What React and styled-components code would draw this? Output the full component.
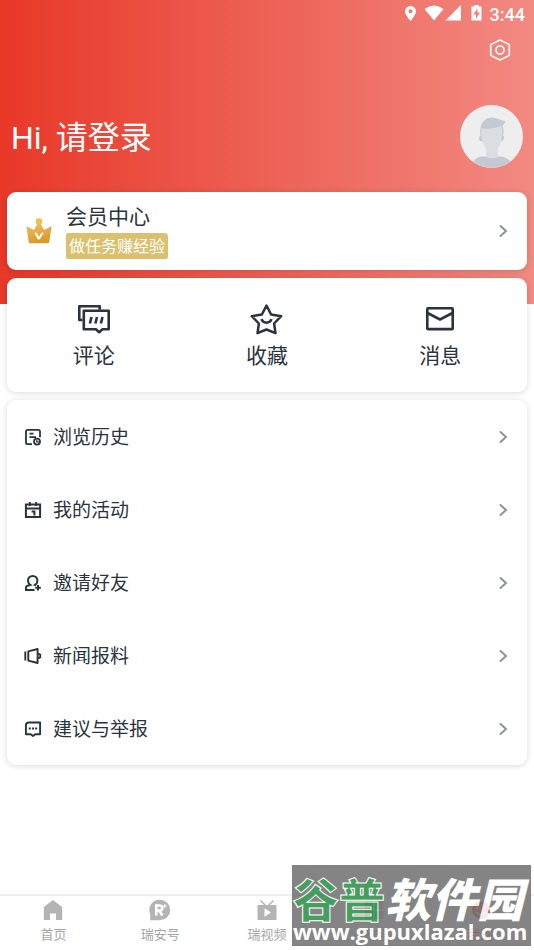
import React from 'react';
import styled, { createGlobalStyle } from 'styled-components';

const shortcuts = [
  { label: '评论', icon: <CommentIcon /> },
  { label: '收藏', icon: <StarIcon /> },
  { label: '消息', icon: <MailIcon /> },
];

const menus = [
  { label: '浏览历史', icon: <HistoryIcon /> },
  { label: '我的活动', icon: <CalendarIcon /> },
  { label: '邀请好友', icon: <InviteIcon /> },
  { label: '新闻报料', icon: <NewsIcon /> },
  { label: '建议与举报', icon: <FeedbackIcon /> },
];

const tabs = [
  { label: '首页', icon: <HomeIcon /> },
  { label: '瑞安号', icon: <RuianIcon /> },
  { label: '瑞视频', icon: <VideoIcon /> },
  { label: '服务', icon: <ServiceIcon /> },
  { label: '我的', icon: <MineIcon />, active: true },
];

function App() {
  return (
    <Page>
      <GlobalStyle />
      <StatusBar>
        <StatusIcons />
        <time>3:44</time>
      </StatusBar>
      <Toolbar>
        <IconButton type="button" aria-label="设置">
          <SettingIcon />
        </IconButton>
      </Toolbar>
      <Profile>
        <Greeting>Hi, 请登录</Greeting>
        <AvatarButton type="button" aria-label="头像">
          <Avatar />
        </AvatarButton>
      </Profile>
      <Cards>
        <MemberCard href="#member">
          <CrownIcon />
          <MemberText>
            <MemberTitle>会员中心</MemberTitle>
            <MemberTag>做任务赚经验</MemberTag>
          </MemberText>
          <Chevron />
        </MemberCard>
        <ShortcutCard>
          {shortcuts.map(({ label, icon }) => (
            <Shortcut type="button" key={label}>
              {icon}
              {label}
            </Shortcut>
          ))}
        </ShortcutCard>
        <MenuCard>
          {menus.map(({ label, icon }) => (
            <li key={label}>
              <MenuLink href="#menu">
                {icon}
                <MenuLabel>{label}</MenuLabel>
                <Chevron />
              </MenuLink>
            </li>
          ))}
        </MenuCard>
      </Cards>
      <TabBar>
        {tabs.map(({ label, icon, active }) => (
          <Tab href="#tab" key={label} $active={active}>
            {icon}
            {label}
          </Tab>
        ))}
      </TabBar>
      <Watermark>
        <SiteName>
          <SiteAccent>谷普</SiteAccent>软件园
        </SiteName>
        <SiteUrl>www.gupuxlazal.com</SiteUrl>
      </Watermark>
    </Page>
  );
}

function StatusIcons() {
  return (
    <svg width="78" height="18" viewBox="0 0 78 18" fill="#fff">
      <path
        fillRule="evenodd"
        d="M5.500 1C2.400 1 0 3.300 0 6.200c0 3.800 5.500 9.800 5.500 9.800S11 10 11 6.200C11 3.300 8.600 1 5.500 1zm0 3.200a2 2 0 1 1 0 4 2 2 0 0 1 0-4z"
      />
      <path d="M19.500 4Q29 -3 38.500 4L29 15.500z" />
      <path d="M56 0v15.500H40.500z" />
      <path
        fillRule="evenodd"
        d="M69 0h5v1.500h2.500v14h-10v-14H69zM72.500 3.500l-4.300 6H71V14l4-6.500h-2.500z"
      />
    </svg>
  );
}

function SettingIcon() {
  return (
    <svg width="22" height="24" viewBox="0 0 22 24" fill="none" stroke="#fff" strokeWidth="1.600">
      <path d="M11 2l9.300 4.600v10.800L11 22l-9.300-4.600V6.600z" strokeLinejoin="round" />
      <circle cx="11" cy="12" r="4" />
    </svg>
  );
}

function Avatar() {
  return (
    <svg width="63" height="63" viewBox="0 0 63 63">
      <clipPath id="avatar-clip">
        <circle cx="31.500" cy="31.500" r="31.500" />
      </clipPath>
      <g clipPath="url(#avatar-clip)">
        <path fill="#eee" d="M0 0h63v63H0z" />
        <path fill="#c5c9d3" d="M12 63c0-8 4-10 9-11.500h21c5 1.500 10 3.500 10 11.500z" />
        <path fill="#dcdde2" d="M26 43h12v8c-1 3-11 3-12 0z" />
        <path
          fill="#c5c9d3"
          d="M20.500 31c-1-9 .5-17 10.500-18.500 5-.7 9 3 14.500 3.500-.5 2.500-2 4-3 4.500 1.500 3 1.200 7 .5 10.500 2 0 1 5-1.500 5.500h-20c-3-.5-3-5.500-1-5.500z"
        />
        <path fill="#dcdde2" d="M21.500 23.500c7 .5 14 0 20-3 1 4 1 11-.2 15.500C40 42 36 46.500 32 46.500S24 42 22.500 36c-1.200-4.500-1.200-9-1-12.500z" />
      </g>
    </svg>
  );
}

function CrownIcon() {
  return (
    <svg width="26" height="26" viewBox="0 0 26 26">
      <defs>
        <linearGradient id="crown" x1="0" y1="0" x2="0.300" y2="1">
          <stop offset="0" stopColor="#f1bd69" />
          <stop offset="1" stopColor="#db9a27" />
        </linearGradient>
      </defs>
      <path fill="url(#crown)" d="M1.200 8.600L7 11.500q1 .4 1.600-.6L11.500 5.500h3l2.900 5.400q.6 1 1.600.6l5.800-2.900q.9-.3.7.7L23.200 24.300q-.2.900-1.200.9H4q-1 0-1.200-.9L.5 9.300q-.2-1 .7-.7z" />
      <circle cx="13" cy="3.500" r="3.300" fill="#ecc04f" />
      <path
        d="M9.800 15.500c1 0 1.800 5 2.900 5s2.800-5 3.600-5"
        fill="none"
        stroke="#fff"
        strokeWidth="2.200"
        strokeLinecap="round"
        strokeLinejoin="round"
      />
    </svg>
  );
}

function Chevron() {
  return (
    <svg width="10" height="14" viewBox="0 0 10 14" fill="none" stroke="#8d93a2" strokeWidth="2">
      <path d="M2.500 2L8 7l-5.500 5" strokeLinecap="round" />
    </svg>
  );
}

function CommentIcon() {
  return (
    <svg width="34" height="32" viewBox="0 0 34 32" fill="none" stroke="#2b333d" strokeWidth="2.600">
      <path d="M5.500 17H2.300V3.300h20.400v3.500" strokeLinejoin="round" />
      <path d="M6.800 7.800h24.900v18.400h-6.200l-3.300 3-3.300-3H6.800z" strokeLinejoin="round" />
      <path d="M14.500 14l-1.600 6.500M20 14l-1.600 6.500M25.500 14l-1.600 6.500" />
    </svg>
  );
}

function StarIcon() {
  return (
    <svg width="34" height="32" viewBox="0 0 34 32" fill="none" stroke="#2b333d" strokeWidth="2.500">
      <path d="M16.500 2.500l4.600 9 10.100 1.700-7.100 7.300 1.400 9.700-9-3.700-9 3.700 1.400-9.700-7.100-7.300 10.100-1.700z" strokeLinejoin="round" />
      <path d="M11.500 16.200c1.500 4.600 8.500 4.600 10 0" />
    </svg>
  );
}

function MailIcon() {
  return (
    <svg width="34" height="32" viewBox="0 0 34 32" fill="none" stroke="#2b333d" strokeWidth="2.600">
      <rect x="4.300" y="5.300" width="25.400" height="20.800" rx="0.600" />
      <path d="M4.500 10l12.500 6.500L29.500 10" />
    </svg>
  );
}

function HistoryIcon() {
  return (
    <svg width="18" height="18" viewBox="0 0 18 18" fill="none" stroke="#2b333d" strokeWidth="1.800">
      <path d="M8 16.200H3.800q-1.800 0-1.800-1.800V3.600q0-1.800 1.800-1.800h10.400Q16 1.800 16 3.600v5.600" />
      <path d="M5.500 5.700h4M5.500 9.200h6.500" />
      <circle cx="13" cy="13.600" r="3" />
      <path d="M12.800 12v1.800h2" strokeWidth="1.200" />
    </svg>
  );
}

function CalendarIcon() {
  return (
    <svg width="18" height="18" viewBox="0 0 18 18" fill="none" stroke="#2b333d" strokeWidth="2">
      <path d="M1.900 3.600h14.200v12.300H1.900zM2 7.600h14M5.800 1v4M12.200 1v4" />
      <path d="M7.600 10.500h2.800v4" />
    </svg>
  );
}

function InviteIcon() {
  return (
    <svg width="18" height="18" viewBox="0 0 18 18" fill="none" stroke="#2b333d" strokeWidth="2">
      <path d="M10.500 16H2v-2.300q0-1.500 1.500-2l2.800-.8C4.700 9.800 4 8.300 4 6.400 4 3.700 6 1.900 8.700 1.900s4.700 1.800 4.700 4.500c0 1.900-.7 3.400-2.300 4.500l1 .3" />
      <path d="M14 11v5.600M11.200 13.800h5.600" />
    </svg>
  );
}

function NewsIcon() {
  return (
    <svg width="18" height="18" viewBox="0 0 18 18" fill="none" stroke="#2b333d" strokeWidth="1.900">
      <path d="M1.300 4.500v9" />
      <path d="M4.300 4.400L13.600 2v14l-9.300-2.400zM13.600 6.300l2.600 1.200v3l-2.600 1.200" strokeLinejoin="round" />
    </svg>
  );
}

function FeedbackIcon() {
  return (
    <svg width="18" height="18" viewBox="0 0 18 18" fill="none" stroke="#2b333d" strokeWidth="1.900">
      <path d="M1.900 14.200V5.500q0-3 3-3h11.200v11.700h-4.800L9 16l-2.300-1.800z" strokeLinejoin="round" />
      <path d="M4.800 8.500h2M8 8.500h2M11.200 8.500h2" />
    </svg>
  );
}

function HomeIcon() {
  return (
    <svg width="22" height="22" viewBox="0 0 22 22" fill="currentColor">
      <path d="M11 1l8.500 6.500q.7.500.7 1.400v11.300q0 .8-.8.800H14v-6.500H8V21H2.600q-.8 0-.8-.8V8.900q0-.9.700-1.400z" />
    </svg>
  );
}

function RuianIcon() {
  return (
    <svg width="22" height="22" viewBox="0 0 22 22" fill="none">
      <path fill="currentColor" d="M11 .8A10.200 10.200 0 1 1 11 21.200H1.200v-6A10.200 10.200 0 0 1 11 .8z" />
      <path d="M7.300 16.500v-10h3c4 0 4 5 0 5h-2M10.300 11.500l3 5" stroke="#fff" strokeWidth="2.600" />
      <path d="M15.800 5v4M13.800 7h4" stroke="#fff" strokeWidth="1" />
    </svg>
  );
}

function VideoIcon() {
  return (
    <svg width="22" height="22" viewBox="0 0 22 22">
      <path d="M4.500 1.500l5 5M17.500 1.500l-5 5" stroke="currentColor" strokeWidth="1.500" />
      <rect x="1.500" y="6" width="19" height="15" rx="0.800" fill="currentColor" />
      <path d="M8.500 9.200l6.500 4.300-6.500 4.300z" fill="#fff" />
    </svg>
  );
}

function ServiceIcon() {
  return (
    <svg width="22" height="22" viewBox="0 0 22 22" fill="currentColor">
      <path d="M2 2h8v8H2zM12 2h8v8h-8zM2 12h8v8H2zM12 12h8v8h-8z" />
    </svg>
  );
}

function MineIcon() {
  return (
    <svg width="22" height="22" viewBox="0 0 22 22" fill="none">
      <circle cx="11" cy="11" r="9" fill="currentColor" />
      <path d="M7 8v2M15 8v2M6.500 13c2 3.500 7 3.500 9 0" stroke="#fff" strokeWidth="1.500" />
    </svg>
  );
}

const GlobalStyle = createGlobalStyle`
  * {
    box-sizing: border-box;
  }

  body {
    margin: 0;
    color: #2b333d;
    background: #fff;
    font-family: Roboto, 'Noto Sans CJK SC', sans-serif;
  }

  button {
    padding: 0;
    border: 0;
    background: none;
    color: inherit;
    font: inherit;
    cursor: pointer;
  }

  a {
    color: inherit;
    text-decoration: none;
  }

  svg {
    display: block;
    flex-shrink: 0;
  }
`;

const Page = styled.div`
  position: relative;
  display: flex;
  flex-direction: column;
  min-height: 100vh;
  background: linear-gradient(90deg, #e83828, #f28a82) no-repeat 0 0 / 100% 304px;
`;

const StatusBar = styled.header`
  display: flex;
  align-items: center;
  justify-content: flex-end;
  gap: 7px;
  height: 28px;
  padding-right: 9px;
  color: #fff;
  font-size: 18px;
  font-weight: 500;
`;

const Toolbar = styled.div`
  display: flex;
  align-items: center;
  justify-content: flex-end;
  height: 44px;
  padding-right: 23px;
`;

const IconButton = styled.button`
  display: flex;
`;

const Profile = styled.section`
  display: flex;
  align-items: center;
  justify-content: space-between;
  height: 120px;
  padding: 9px 11px 0;
`;

const Greeting = styled.h1`
  margin: 0;
  padding-top: 2px;
  color: #fff;
  font-size: 32px;
  font-weight: 400;
  line-height: 44px;
`;

const AvatarButton = styled.button`
  display: flex;
  border-radius: 50%;
`;

const Cards = styled.main`
  display: flex;
  flex: 1;
  flex-direction: column;
  gap: 8px;
  padding: 0 7px;
`;

const cardShadow = '0 1px 6px rgba(0, 0, 0, 0.15)';

const MemberCard = styled.a`
  display: flex;
  align-items: center;
  height: 78px;
  padding: 0 19px;
  border-radius: 9px;
  background: #fff;
  box-shadow: ${cardShadow};
`;

const MemberText = styled.div`
  display: flex;
  flex: 1;
  flex-direction: column;
  align-items: flex-start;
  gap: 2px;
  margin-left: 14px;
`;

const MemberTitle = styled.strong`
  font-size: 21px;
  font-weight: 400;
  line-height: 28px;
`;

const MemberTag = styled.span`
  padding: 1px 3px 0;
  border-radius: 2px 4px 2px 2px;
  background: #dbc06e;
  color: #fff;
  font-size: 16px;
  line-height: 25px;
`;

const ShortcutCard = styled.div`
  display: flex;
  height: 114px;
  border-radius: 9px;
  background: #fff;
  box-shadow: ${cardShadow};
`;

const Shortcut = styled.button`
  display: flex;
  flex: 1;
  flex-direction: column;
  align-items: center;
  justify-content: center;
  gap: 7px;
  padding-top: 3px;
  font-size: 21px;
  line-height: 28px;
`;

const MenuCard = styled.ul`
  margin: 0;
  padding: 0;
  border-radius: 9px;
  background: #fff;
  box-shadow: ${cardShadow};
  list-style: none;
`;

const MenuLink = styled.a`
  display: flex;
  align-items: center;
  height: 73px;
  padding: 0 19px 0 17px;
`;

const MenuLabel = styled.span`
  flex: 1;
  margin-left: 11px;
  padding-top: 2px;
  font-size: 19px;
  line-height: 28px;
`;

const TabBar = styled.nav`
  display: flex;
  height: 56px;
  border-top: 2px solid #eee;
  background: #fff;
`;

const Tab = styled.a`
  display: flex;
  flex: 1;
  flex-direction: column;
  align-items: center;
  gap: 5px;
  padding-top: 3px;
  color: ${({ $active }) => ($active ? '#e83828' : '#a5a7a6')};
  font-size: 13px;
  line-height: 18px;

  svg {
    color: ${({ $active }) => ($active ? '#e83828' : '#b3b5b4')};
  }
`;

const Watermark = styled.aside`
  position: absolute;
  right: 3px;
  bottom: 4px;
  width: 239px;
  height: 81px;
  padding-top: 10px;
  border: 1px solid #707070;
  background: #747474;
  color: #fff;
  opacity: 0.88;
  pointer-events: none;
  white-space: nowrap;
`;

const SiteName = styled.div`
  font-family: 'Noto Sans CJK SC', sans-serif;
  font-size: 46px;
  font-style: italic;
  font-weight: 900;
  line-height: 42px;
`;

const SiteAccent = styled.span`
  color: #2c9048;
  font-style: normal;
  -webkit-text-stroke: 1px #fff;
`;

const SiteUrl = styled.div`
  font-family: 'Open Sans', sans-serif;
  font-size: 22px;
  font-weight: 700;
  line-height: 26px;
`;

export default App;
